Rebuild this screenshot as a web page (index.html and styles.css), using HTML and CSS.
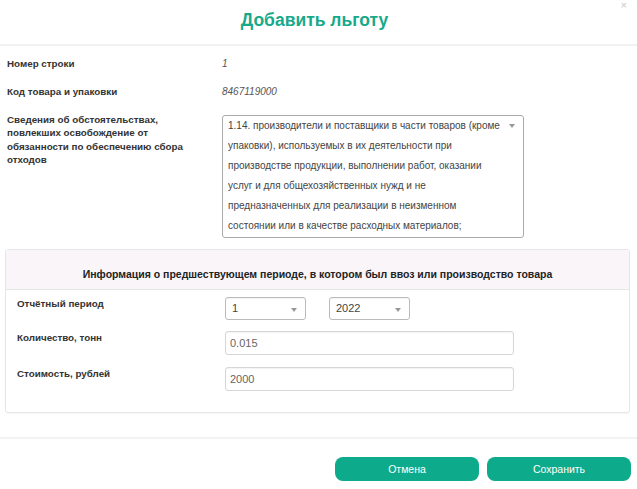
FILE: index.html
```html
<!DOCTYPE html>
<html lang="ru">
<head>
<meta charset="utf-8">
<title>Добавить льготу</title>
<link rel="stylesheet" href="styles.css">
</head>
<body>
<div class="modal">
  <div class="modal-header">
    <h2 class="title">Добавить льготу</h2>
    <span class="close">×</span>
  </div>
  <div class="modal-body">
    <div class="row row-simple">
      <div class="label">Номер строки</div>
      <div class="value">1</div>
    </div>
    <div class="row row-simple">
      <div class="label">Код товара и упаковки</div>
      <div class="value">8467119000</div>
    </div>
    <div class="row row-desc">
      <div class="label label-multi">Сведения об обстоятельствах, повлекших освобождение от обязанности по обеспечению сбора отходов</div>
      <div class="select select-multi">
        <div class="select-text">1.14. производители и поставщики в части товаров (кроме упаковки), используемых в их деятельности при производстве продукции, выполнении работ, оказании услуг и для общехозяйственных нужд и не предназначенных для реализации в неизменном состоянии или в качестве расходных материалов;</div>
        <span class="caret"></span>
      </div>
    </div>
    <div class="panel">
      <div class="panel-heading">Информация о предшествующем периоде, в котором был ввоз или производство товара</div>
      <div class="panel-body">
        <div class="prow">
          <div class="plabel">Отчётный период</div>
          <div class="pfields">
            <div class="select select-small"><span>1</span><span class="caret"></span></div>
            <div class="select select-small"><span>2022</span><span class="caret"></span></div>
          </div>
        </div>
        <div class="prow">
          <div class="plabel">Количество, тонн</div>
          <div class="pfields"><div class="input">0.015</div></div>
        </div>
        <div class="prow">
          <div class="plabel">Стоимость, рублей</div>
          <div class="pfields"><div class="input">2000</div></div>
        </div>
      </div>
    </div>
  </div>
  <div class="modal-footer">
    <button class="btn">Отмена</button>
    <button class="btn">Сохранить</button>
  </div>
</div>
</body>
</html>
```

FILE: styles.css
```css
* { box-sizing: border-box; }
html, body { margin: 0; padding: 0; background: #fff; }
body {
  width: 637px;
  height: 489px;
  font-family: "Liberation Sans", Arial, sans-serif;
  font-size: 10px;
  color: #333;
  overflow: hidden;
}
.modal { width: 637px; }
.modal-header {
  position: relative;
  height: 46px;
  padding-right: 8px;
  border-bottom: 2px solid #f1f1f1;
  text-align: center;
}
.title {
  margin: 0;
  font-size: 17.5px;
  line-height: 41px;
  font-weight: bold;
  color: #17a98a;
}
.close {
  position: absolute;
  right: 10px;
  top: 0;
  font-size: 11px;
  line-height: 11px;
  color: #c8c8c8;
}
.modal-body { padding: 11px 7px 0 5px; }
.row { display: flex; padding-left: 2px; }
.row-simple { height: 14px; line-height: 14px; margin-bottom: 14px; }
.label { width: 215px; font-weight: bold; font-size: 9.8px; color: #333; }
.value { font-style: italic; color: #555; }
.row-desc { margin-top: 1px; }
.label-multi { line-height: 13.3px; padding-right: 22px; }
.select {
  position: relative;
  border: 1px solid #aaa;
  border-radius: 3px;
  background: #fff;
  color: #444;
}
.select-multi {
  width: 302px;
  margin-top: 2px;
  padding: 0 18px 1px 5px;
  line-height: 20px;
}
.caret {
  position: absolute;
  right: 8px;
  top: 8px;
  width: 0;
  height: 0;
  border-left: 3px solid transparent;
  border-right: 3px solid transparent;
  border-top: 4px solid #999;
}
.panel {
  margin-top: 11px;
  width: 625px;
  border: 1px solid #e6e6e6;
  border-radius: 3px;
  box-shadow: 0 1px 1px rgba(0,0,0,0.04);
}
.panel-heading {
  height: 40px;
  padding-top: 9px;
  line-height: 30px;
  background: #f9f5f9;
  border-bottom: 1px solid #e6e6e6;
  text-align: center;
  font-size: 10.5px;
  font-weight: bold;
  color: #222;
}
.panel-body { padding: 7px 11px 21px; }
.prow { display: flex; margin-bottom: 12px; }
.prow:first-child { margin-bottom: 11px; }
.prow:last-child { margin-bottom: 0; }
.plabel { width: 208px; font-weight: bold; font-size: 9.8px; line-height: 14px; }
.pfields { display: flex; gap: 23px; }
.select-small {
  width: 81px;
  height: 23px;
  line-height: 21px;
  padding-left: 6px;
  font-size: 11px;
  border-color: #bbb;
  box-shadow: inset 0 1px 1px rgba(0,0,0,0.05);
}
.select-small .caret { top: 10px; }
.input {
  width: 289px;
  height: 24px;
  line-height: 22px;
  padding-left: 4px;
  font-size: 11px;
  color: #666;
  border: 1px solid #d6d6d6;
  border-radius: 3px;
  box-shadow: inset 0 1px 1px rgba(0,0,0,0.05);
}
.modal-footer {
  margin-top: 24px;
  border-top: 2px solid #f3f3f3;
  padding: 18px 6px 0 0;
  display: flex;
  justify-content: flex-end;
  gap: 8px;
}
.btn {
  width: 144px;
  height: 24px;
  border: none;
  border-radius: 8px;
  background: #0daa8b;
  color: #fff;
  font-family: "Liberation Sans", Arial, sans-serif;
  font-size: 10.5px;
  padding: 0;
}
```
